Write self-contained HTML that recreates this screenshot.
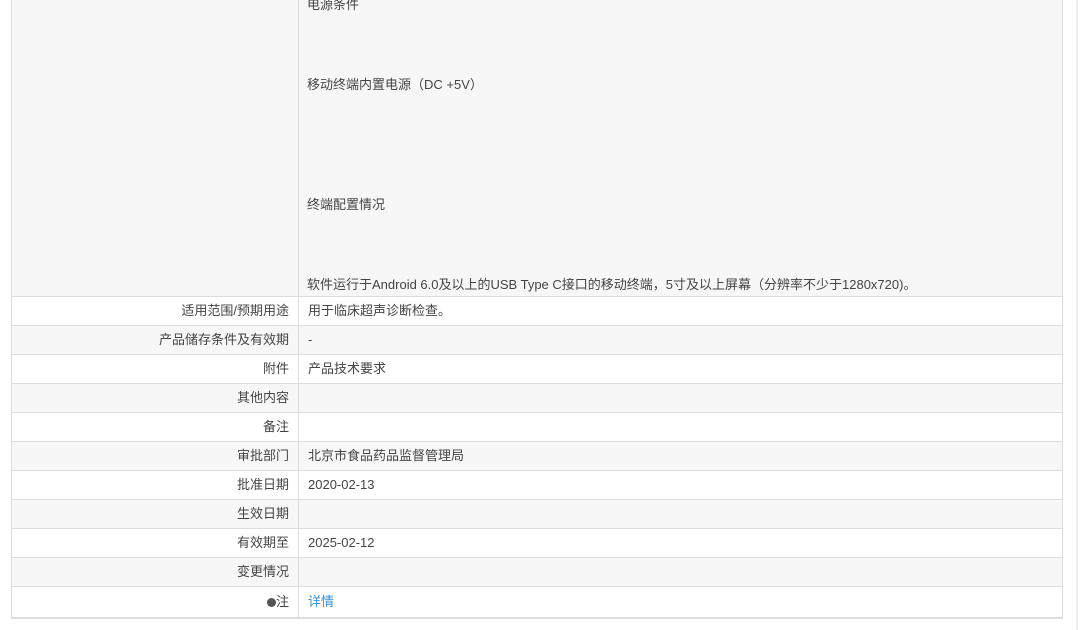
<!DOCTYPE html>
<html><head><meta charset="utf-8"><style>
body{margin:0;width:1082px;height:630px;background:#fff;overflow:hidden;position:relative;font-family:"Liberation Sans","Noto Sans CJK SC",sans-serif;font-size:13px;color:#444}
.tbl{position:absolute;left:11px;top:-1px;width:1050px;border:1px solid #ddd;border-top:none;border-bottom:2px solid #ddd}
.row{display:flex;height:28px;border-top:1px solid #ddd;line-height:28px}
.row.g{background:#f7f7f7}
.l{width:277px;text-align:right;padding-right:9px;border-right:1px solid #ddd;flex:none}
.r{padding-left:9px;flex:1}
.t{position:absolute;left:307px;white-space:nowrap}
.sb{position:absolute;left:1076px;top:0;width:2px;height:630px;background:#eee}
</style></head><body>
<div class="tbl">
<div class="row g" style="height:297px;border-top:none;position:relative"><div class="l"></div><div class="r"></div></div>
<div class="row"><div class="l">适用范围/预期用途</div><div class="r">用于临床超声诊断检查。</div></div>
<div class="row g"><div class="l">产品储存条件及有效期</div><div class="r">-</div></div>
<div class="row"><div class="l">附件</div><div class="r">产品技术要求</div></div>
<div class="row g"><div class="l">其他内容</div><div class="r"></div></div>
<div class="row"><div class="l">备注</div><div class="r"></div></div>
<div class="row g"><div class="l">审批部门</div><div class="r">北京市食品药品监督管理局</div></div>
<div class="row"><div class="l">批准日期</div><div class="r">2020-02-13</div></div>
<div class="row g"><div class="l">生效日期</div><div class="r"></div></div>
<div class="row"><div class="l">有效期至</div><div class="r">2025-02-12</div></div>
<div class="row g"><div class="l">变更情况</div><div class="r"></div></div>
<div class="row" style="height:30px;line-height:30px"><div class="l"><span style="display:inline-block;width:9px;height:9px;border-radius:50%;background:#555;vertical-align:-1px"></span>注</div><div class="r" style="color:#3a8ed0">详情</div></div>
</div>
<div class="t" style="top:-6px">电源条件</div>
<div class="t" style="top:74px">移动终端内置电源（DC +5V）</div>
<div class="t" style="top:194px">终端配置情况</div>
<div class="t" style="top:274px">软件运行于Android 6.0及以上的USB Type C接口的移动终端，5寸及以上屏幕（分辨率不少于1280x720)。</div>
<div class="sb"></div>
</body></html>
